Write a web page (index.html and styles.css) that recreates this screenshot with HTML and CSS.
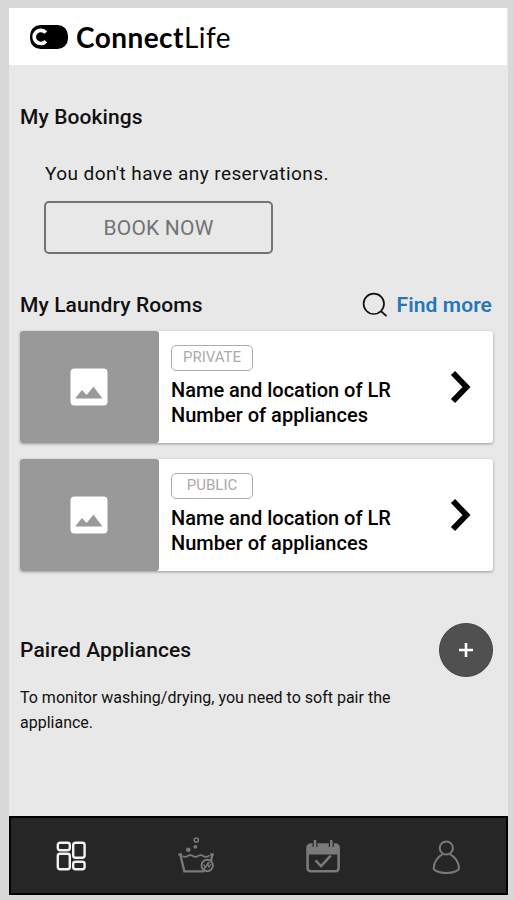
FILE: index.html
```html
<!DOCTYPE html>
<html lang="en">
<head>
<meta charset="UTF-8">
<meta name="viewport" content="width=device-width, initial-scale=1.0">
<title>ConnectLife</title>
<link rel="stylesheet" href="styles.css">
</head>
<body>

<div class="screen">
  <header class="header">
    <svg class="logo-mark" width="40" height="26" viewBox="0 0 40 26">
      <rect x="1" y="1" width="38" height="24" rx="10.5" fill="#000"/>
      <path d="M16.8 8.6A6.6 6.6 0 1 0 16.8 17.2" fill="none" stroke="#fff" stroke-width="3.7"/>
    </svg>
    <div class="logo-text"><span class="logo-bold">Connect</span><span class="logo-light">Life</span></div>
  </header>

  <main class="content">
    <section class="bookings">
      <h2 class="title">My Bookings</h2>
      <p class="empty">You don't have any reservations.</p>
      <button class="book-btn">BOOK NOW</button>
    </section>

    <section class="rooms">
      <div class="rooms-head">
        <h2 class="title">My Laundry Rooms</h2>
        <a class="find-more" href="#">
          <svg width="26" height="26" viewBox="0 0 26 26" fill="none" stroke="#111" stroke-width="1.7">
            <circle cx="11.8" cy="11.8" r="10.2"/>
            <path d="M18.8 19l5.7 5.2"/>
          </svg>
          <span>Find more</span>
        </a>
      </div>

      <div class="card">
        <div class="thumb">
          <svg width="38" height="38" viewBox="0 0 38 38">
            <rect x="0.5" y="0.5" width="37" height="37" rx="4" fill="#fff"/>
            <path d="M5 30.5L12 22l4.5 5 7-8.3 9 11.8z" fill="#999"/>
          </svg>
        </div>
        <div class="info">
          <span class="tag">PRIVATE</span>
          <p class="room">Name and location of LR<br>Number of appliances</p>
        </div>
        <svg class="chevron" width="22" height="34" viewBox="0 0 22 34" fill="none" stroke="#000" stroke-width="5.8">
          <path d="M3 3l13.5 14L3 31"/>
        </svg>
      </div>

      <div class="card">
        <div class="thumb">
          <svg width="38" height="38" viewBox="0 0 38 38">
            <rect x="0.5" y="0.5" width="37" height="37" rx="4" fill="#fff"/>
            <path d="M5 30.5L12 22l4.5 5 7-8.3 9 11.8z" fill="#999"/>
          </svg>
        </div>
        <div class="info">
          <span class="tag">PUBLIC</span>
          <p class="room">Name and location of LR<br>Number of appliances</p>
        </div>
        <svg class="chevron" width="22" height="34" viewBox="0 0 22 34" fill="none" stroke="#000" stroke-width="5.8">
          <path d="M3 3l13.5 14L3 31"/>
        </svg>
      </div>
    </section>

    <section class="paired">
      <div class="paired-head">
        <h2 class="title">Paired Appliances</h2>
        <button class="add-btn" aria-label="Add">
          <svg width="14" height="14" viewBox="0 0 14 14" stroke="#fff" stroke-width="2.6">
            <path d="M7 0v14M0 7h14"/>
          </svg>
        </button>
      </div>
      <p class="hint">To monitor washing/drying, you need to soft pair the appliance.</p>
    </section>
  </main>

  <nav class="navbar">
    <!-- dashboard -->
    <a class="nav-item" href="#">
      <svg width="40" height="40" viewBox="0 0 40 40" fill="none" stroke="#f2f2f2" stroke-width="2.4">
        <rect x="6.8" y="6.8" width="12" height="7.5" rx="2.2"/>
        <rect x="6.8" y="17.8" width="12" height="15.5" rx="2.2"/>
        <rect x="22.2" y="6.8" width="11.4" height="15" rx="2.2"/>
        <rect x="22.2" y="25.8" width="11.4" height="7.5" rx="2.2"/>
      </svg>
    </a>
    <!-- washing -->
    <a class="nav-item" href="#">
      <svg width="40" height="40" viewBox="0 -1 40 40" fill="none" stroke="#7a7a7a" stroke-width="2.3">
        <path d="M2.5 17.5H6M4.3 17.5l4 16.8h20M34.2 17.5h3.5M36.2 18L35 24"/>
        <path d="M6.5 19c2 1.2 3.5 1.2 5.2 0s3.5-1.2 5.2 0 3.5 1.2 5.2 0 3.5-1.2 5.2 0 4 1 6.2-.5" stroke-width="1.6"/>
        <circle cx="20.3" cy="3" r="2.1" stroke-width="1.5"/>
        <circle cx="12.3" cy="12.8" r="2.3" fill="#7a7a7a" stroke="none"/>
        <circle cx="19.3" cy="9.8" r="1.9" fill="#7a7a7a" stroke="none"/>
        <circle cx="31.2" cy="28.5" r="5.7" stroke-width="1.9"/>
        <path d="M27.5 27.5l2 3 2-4 1.5 3.5 2-3M28 32l5.5-7" stroke-width="1.3"/>
      </svg>
    </a>
    <!-- calendar -->
    <a class="nav-item" href="#">
      <svg width="40" height="40" viewBox="-2 -1 40 40" fill="none" stroke="#7a7a7a" stroke-width="2.6">
        <rect x="4.6" y="7.6" width="31" height="26.6" rx="3"/>
        <path d="M4.5 17.5V9q0-2 2-2h27q2 0 2 2v8.5z" fill="#7a7a7a" stroke="none"/>
        <path d="M12 3v7M28.3 3v7" stroke="#262626" stroke-width="5"/>
        <path d="M12 4v5.5M28.3 4v5.5" stroke-linecap="round"/>
        <path d="M12.5 23.3l5.6 5.8 9.6-10.4"/>
      </svg>
    </a>
    <!-- profile -->
    <a class="nav-item" href="#">
      <svg width="40" height="40" viewBox="0 -1 40 40" fill="none" stroke="#7a7a7a" stroke-width="2">
        <circle cx="20.3" cy="11" r="6.6"/>
        <path d="M16.5 17.3C12 19.5 7.7 25 7.7 31.3c0 2.2 5.5 4.7 12.7 4.7S33 33.5 33 31.3C33 25 28.5 19.5 24.1 17.3"/>
      </svg>
    </a>
  </nav>
</div>

</body>
</html>
```
FILE: styles.css
```css
* {
  box-sizing: border-box;
}
body {
  margin: 0;
  padding: 8px 5px 5px 9px;
  height: 900px;
  background-color: #d8d8d8;
  font-family: Roboto, sans-serif;
  color: #111;
}
h2, p {
  margin: 0;
}
a {
  text-decoration: none;
}
.screen {
  height: 887px;
  display: flex;
  flex-direction: column;
  background-color: #e8e8e8;
}

/* header */
.header {
  height: 57px;
  margin-right: 1px;
  padding-left: 20px;
  display: flex;
  align-items: center;
  gap: 7px;
  background-color: #fff;
}
.logo-text {
  font-family: Lato, sans-serif;
  font-size: 28px;
  line-height: 34px;
  letter-spacing: 0.45px;
  color: #000;
}
.logo-bold {
  font-weight: 700;
}
.logo-light {
  font-weight: 400;
}

/* content */
.content {
  flex: 1;
  padding: 39px 15px 0 11px;
}
.title {
  font-size: 21px;
  font-weight: 500;
  line-height: 27px;
  letter-spacing: 0.1px;
}
.bookings {
  height: 188px;
}
.empty {
  margin: 30px 0 14px 25px;
  font-size: 19px;
  line-height: 26px;
  letter-spacing: 0.42px;
}
.book-btn {
  display: block;
  width: 229px;
  height: 53px;
  margin-left: 24px;
  padding: 0;
  border: 2px solid #737373;
  border-radius: 5px;
  background: none;
  color: #737373;
  font-family: inherit;
  font-size: 21px;
  letter-spacing: 0.2px;
}
.rooms-head {
  display: flex;
  justify-content: space-between;
  height: 39px;
}
.find-more {
  display: flex;
  gap: 9px;
  height: 26px;
  padding-right: 1px;
  align-items: center;
  font-size: 21px;
  font-weight: 600;
  letter-spacing: 0.1px;
  color: #2877b5;
}
.card {
  display: flex;
  align-items: center;
  height: 112px;
  margin-bottom: 16px;
  padding-right: 21px;
  border-radius: 3px;
  background-color: #fff;
  box-shadow: 0 1px 3px rgba(0, 0, 0, 0.35);
}
.thumb {
  width: 139px;
  height: 112px;
  padding-right: 2px;
  display: flex;
  align-items: center;
  justify-content: center;
  border-radius: 3px;
  background-color: #999;
}
.info {
  flex: 1;
  padding: 0 0 1px 12px;
}
.tag {
  display: block;
  width: 82px;
  height: 26px;
  margin-bottom: 7px;
  border: 1px solid #aaa;
  border-radius: 5px;
  font-size: 15px;
  line-height: 23px;
  text-align: center;
  color: #aaa;
}
.room {
  font-size: 20px;
  font-weight: 500;
  line-height: 25px;
  color: #000;
}
.paired {
  padding-top: 36px;
}
.paired-head {
  display: flex;
  align-items: center;
  justify-content: space-between;
}
.add-btn {
  width: 54px;
  height: 54px;
  padding: 0;
  display: flex;
  align-items: center;
  justify-content: center;
  border: 1px solid #444;
  border-radius: 50%;
  background-color: #505050;
}
.hint {
  width: 400px;
  margin-top: 8px;
  font-size: 16px;
  line-height: 25px;
}

/* bottom navigation */
.navbar {
  height: 79px;
  display: grid;
  grid-template-columns: repeat(4, 125px);
  justify-content: center;
  border: 2px solid #000;
  background-color: #262626;
}
.nav-item {
  display: flex;
  align-items: center;
  justify-content: center;
}
```
